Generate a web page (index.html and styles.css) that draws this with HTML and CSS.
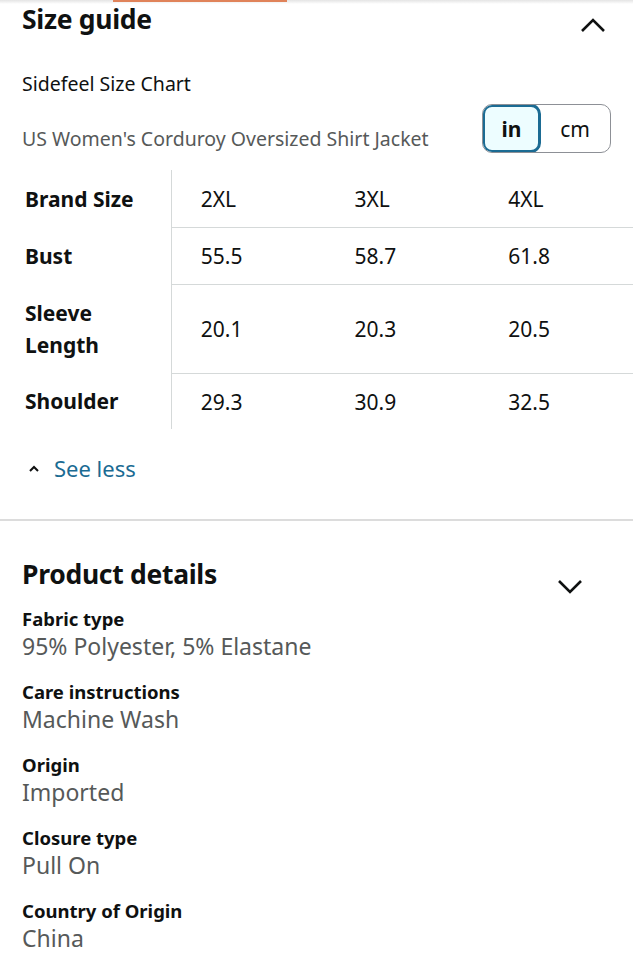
FILE: index.html
```html
<!DOCTYPE html>
<html lang="en">
  <head>
    <meta charset="UTF-8" />
    <title>Size guide</title>
    <meta name="viewport" content="width=device-width, initial-scale=1" />
    <link rel="stylesheet" href="styles.css">
  </head>
  <body>
    <div class="top-bar"><span class="tab-mark"></span></div>

    <section class="section">
      <div class="section-head">
        <h2>Size guide</h2>
        <svg class="chevron" width="26" height="16" viewBox="0 0 26 16">
          <path d="M2 14 L13 3 L24 14" fill="none" stroke="#0f1111" stroke-width="2.6" />
        </svg>
      </div>

      <div class="chart-name">Sidefeel Size Chart</div>

      <div class="chart-row">
        <div class="chart-product">US Women's Corduroy Oversized Shirt Jacket</div>
        <div class="unit-toggle">
          <span class="unit active">in</span>
          <span class="unit">cm</span>
        </div>
      </div>

      <table class="size-table">
        <tr class="row-brand">
          <th>Brand Size</th>
          <td>2XL</td>
          <td>3XL</td>
          <td>4XL</td>
        </tr>
        <tr class="row-bust">
          <th>Bust</th>
          <td>55.5</td>
          <td>58.7</td>
          <td>61.8</td>
        </tr>
        <tr class="row-sleeve">
          <th>Sleeve<br>Length</th>
          <td>20.1</td>
          <td>20.3</td>
          <td>20.5</td>
        </tr>
        <tr class="row-shoulder">
          <th>Shoulder</th>
          <td>29.3</td>
          <td>30.9</td>
          <td>32.5</td>
        </tr>
      </table>

      <a class="see-less" href="#">
        <svg width="12" height="8" viewBox="0 0 12 8">
          <path d="M2 7 L6 3 L10 7" fill="none" stroke="#0f1111" stroke-width="2" />
        </svg>
        See less
      </a>
    </section>

    <section class="section details">
      <div class="section-head">
        <h2>Product details</h2>
        <svg class="chevron down" width="26" height="16" viewBox="0 0 26 16">
          <path d="M2 3 L13 14 L24 3" fill="none" stroke="#0f1111" stroke-width="2.6" />
        </svg>
      </div>

      <dl class="detail-list">
        <dt>Fabric type</dt>
        <dd>95% Polyester, 5% Elastane</dd>
        <dt>Care instructions</dt>
        <dd>Machine Wash</dd>
        <dt>Origin</dt>
        <dd>Imported</dd>
        <dt>Closure type</dt>
        <dd>Pull On</dd>
        <dt>Country of Origin</dt>
        <dd>China</dd>
      </dl>
    </section>
  </body>
</html>
```

FILE: styles.css
```css
body {
  margin: 0;
  font-family: "Noto Sans", "Open Sans", sans-serif;
  color: #0f1111;
  background: #fff;
}

.top-bar {
  height: 4px;
  background: linear-gradient(to bottom, #e4e4e4, #fff);
  position: relative;
}

.tab-mark {
  position: absolute;
  left: 113px;
  top: 0;
  width: 174px;
  height: 2px;
  background: #e0835a;
}

.section {
  padding: 0 22px;
}

.section-head {
  display: flex;
  justify-content: space-between;
  align-items: center;
}

h2 {
  margin: 0;
  font-size: 26.5px;
  font-weight: 700;
  line-height: 30px;
  letter-spacing: -0.3px;
}

.section-head .chevron {
  margin-right: 5px;
  margin-top: 12px;
}

.chart-name {
  margin-top: 37px;
  font-size: 19.5px;
  line-height: 26px;
}

.chart-row {
  display: flex;
  justify-content: space-between;
  align-items: center;
  margin-top: 7px;
}

.chart-product {
  font-size: 19.5px;
  color: #565959;
  margin-top: 20px;
}

.unit-toggle {
  display: flex;
  height: 47px;
  border-radius: 10px;
  border: 1px solid #8d9096;
  overflow: hidden;
}

.unit {
  display: flex;
  align-items: center;
  justify-content: center;
  font-size: 21px;
  width: 70px;
}

.unit.active {
  width: 53px;
  font-weight: 700;
  background: #edfdff;
  border: 3px solid #1b6b93;
  border-radius: 10px;
  margin: -1px;
}

.size-table {
  margin-top: 17px;
  margin-left: -22px;
  width: calc(100% + 44px);
  border-collapse: collapse;
  font-size: 21px;
}

.size-table th {
  text-align: left;
  font-weight: 700;
  width: 145px;
  padding: 0 0 0 25px;
  line-height: 32px;
  border-right: 1px solid #d5d9d9;
}

.size-table td {
  padding: 0 0 0 29px;
  width: 124px;
  border-bottom: 1px solid #d5d9d9;
}

.size-table tr:last-child td {
  border-bottom: none;
}

.row-brand th,
.row-brand td {
  height: 57px;
}

.row-bust th,
.row-bust td {
  height: 56px;
}

.row-sleeve th,
.row-sleeve td {
  height: 88px;
}

.row-shoulder th,
.row-shoulder td {
  height: 55px;
}

.see-less {
  display: flex;
  align-items: center;
  gap: 14px;
  margin: 24px 0 0 6px;
  font-size: 22px;
  color: #1b6b93;
  text-decoration: none;
  padding-bottom: 36px;
}

.details {
  border-top: 2px solid #dcdcdc;
  padding-top: 33px;
}

.section-head .chevron.down {
  margin-right: 28px;
  margin-top: 24px;
}

.detail-list {
  margin: 12px 0 0;
}

.detail-list dt {
  font-size: 18.5px;
  font-weight: 700;
  line-height: 26px;
}

.detail-list dd {
  margin: 1px 0 20px;
  font-size: 23px;
  color: #565959;
  line-height: 26px;
}
```
